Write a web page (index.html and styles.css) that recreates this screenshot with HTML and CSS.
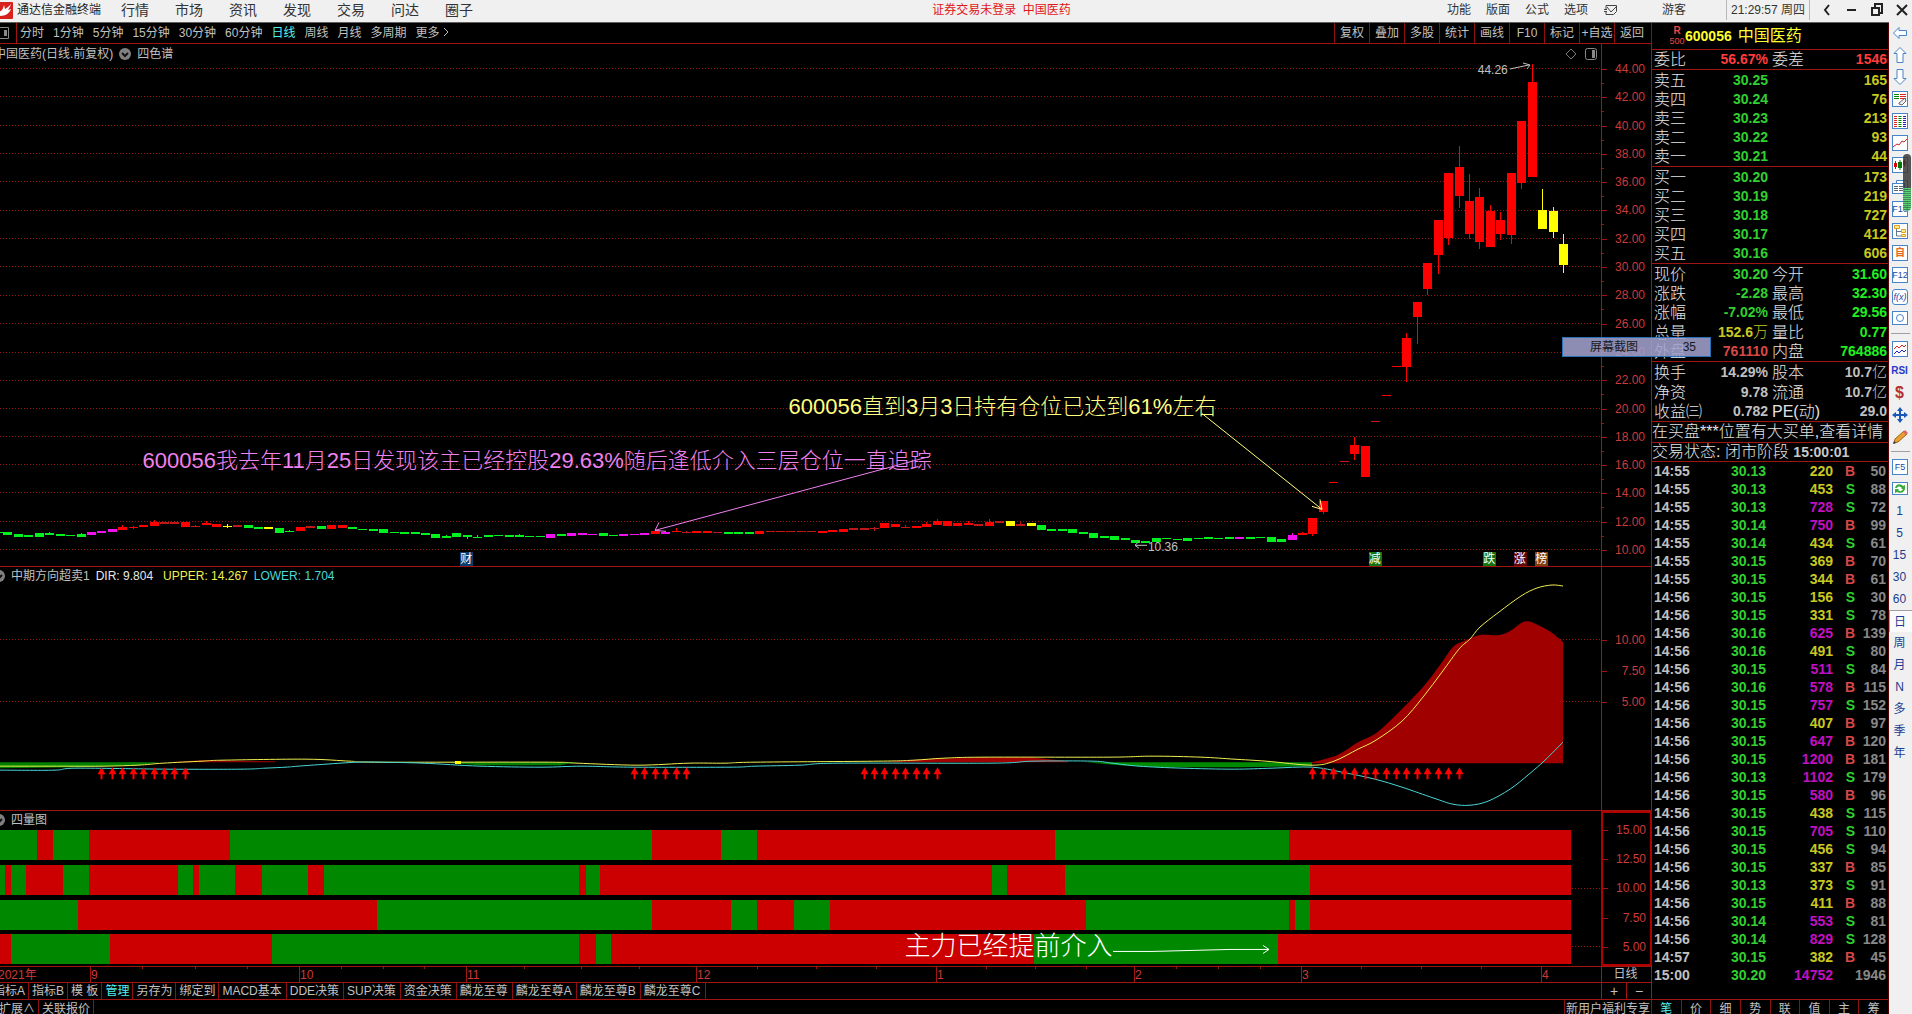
FILE: index.html
```html
<!DOCTYPE html>
<html lang="zh-CN">
<head>
<meta charset="utf-8">
<title>通达信金融终端</title>
<link rel="stylesheet" href="styles.css">
</head>
<body>
<header class="titlebar">
  <svg class="logo" viewBox="0 0 13 17"><rect x="-4" width="17" height="17" rx="1" fill="#d8201c"/><path d="M-1 10C2 9 3 7 4 3l1 4c2-1 3-2 6-5-1 3-2 4-3 6l3-1c-2 5-6 7-12 7z" fill="#fff"/></svg>
  <h1 class="brand">通达信金融终端</h1>
  <nav class="menu">
    <a href="#">行情</a><a href="#">市场</a><a href="#">资讯</a><a href="#">发现</a><a href="#">交易</a><a href="#">问达</a><a href="#">圈子</a>
  </nav>
  <p class="notice">证券交易未登录&nbsp; 中国医药</p>
  <nav class="menu-right">
    <a href="#">功能</a><a href="#">版面</a><a href="#">公式</a><a href="#">选项</a>
    <button class="bare" aria-label="消息"><svg width="15" height="12" viewBox="0 0 15 12" fill="none" stroke="#444"><path d="M3 5V1.500h10.500v6l-3 3H3V8M1 5.500h3M1 7.500h3M4 3l4 5 6-6"/></svg></button>
  </nav>
  <span class="guest">游客</span>
  <time class="clock">21:29:57 周四</time>
  <div class="window-buttons">
    <button class="bare" aria-label="后退"><svg width="12" height="14" fill="none" stroke="#222" stroke-width="2"><path d="M8 2L4 7l4 5"/></svg></button>
    <button class="bare" aria-label="最小化"><svg width="12" height="14" fill="none" stroke="#222" stroke-width="2"><path d="M1 7h9"/></svg></button>
    <button class="bare" aria-label="还原"><svg width="12" height="14" fill="none" stroke="#222" stroke-width="2"><path d="M1 5h7v7H1zM4 4V1h7v9H9"/></svg></button>
    <button class="bare" aria-label="关闭"><svg width="12" height="14" fill="none" stroke="#222" stroke-width="2"><path d="M1 2l10 10M11 2L1 12"/></svg></button>
  </div>
</header>

<main class="workspace">
  <section class="charts">
    <div class="toolbar">
      <button class="bare panel-toggle" aria-label="侧栏"><svg width="16" height="12" viewBox="0 0 16 12"><path d="M-2 .5H8.500v11H-2" fill="none" stroke="#888"/><rect x="4" y="3" width="3" height="6" fill="#888"/></svg></button>
      <nav class="periods">
        <a href="#">分时</a><a href="#">1分钟</a><a href="#">5分钟</a><a href="#">15分钟</a><a href="#">30分钟</a><a href="#">60分钟</a><a href="#" class="current">日线</a><a href="#">周线</a><a href="#">月线</a><a href="#">多周期</a><a href="#">更多<svg width="9" height="10" fill="none" stroke="#c0c0c0"><path d="M4 1l4 4-4 4"/></svg></a>
      </nav>
      <div class="actions">
        <button>复权</button><button>叠加</button><button>多股</button><button>统计</button><button>画线</button><button>F10</button><button>标记</button><button>+自选</button><button>返回</button>
      </div>
    </div>

    <div class="pane price">
      <div class="plot">
        <svg id="price" viewBox="0 0 1601 523" preserveAspectRatio="none"></svg>
        <div class="caption from-edge"><span>中国医药(日线.前复权)</span><i class="chevron"><svg width="12" height="12" fill="none" stroke="#111" stroke-width="2"><path d="M3 5l3 3 3-3"/></svg></i><span>四色谱</span></div>
        <div class="corner"><svg width="12" height="12" fill="none" stroke="#777"><path d="M6 1l5 5-5 5-5-5z"/></svg><svg width="12" height="12"><rect x=".5" y=".5" width="11" height="11" rx="2" fill="none" stroke="#888"/><rect x="7" y="2" width="3" height="8" fill="#888"/></svg></div>
        <p class="note note-pink">600056我去年11月25日发现该主已经控股29.63%随后逢低介入三层仓位一直追踪</p>
        <p class="note note-yellow">600056直到3月3日持有仓位已达到61%左右</p>
        <span class="mark high">44.26</span><span class="mark low">10.36</span>
        <span class="tag tag-blue">财</span><span class="tag tag-green">减</span><span class="tag tag-green tag-fall">跌</span><span class="tag tag-red">涨</span><span class="tag tag-brown">榜</span>
      </div>
      <ol class="axis axis-price"><li>44.00</li><li>42.00</li><li>40.00</li><li>38.00</li><li>36.00</li><li>34.00</li><li>32.00</li><li>30.00</li><li>28.00</li><li>26.00</li><li>24.00</li><li>22.00</li><li>20.00</li><li>18.00</li><li>16.00</li><li>14.00</li><li>12.00</li><li>10.00</li></ol>
    </div>

    <div class="pane trend">
      <div class="plot">
        <svg id="trend" viewBox="0 0 1601 242" preserveAspectRatio="none"></svg>
        <div class="caption"><i class="chevron cut"><svg width="12" height="12" fill="none" stroke="#111" stroke-width="2"><path d="M3 5l3 3 3-3"/></svg></i><span>中期方向超卖1</span><span class="dir">DIR: 9.804</span><span class="upper">UPPER: 14.267</span><span class="lower">LOWER: 1.704</span></div>
      </div>
      <ol class="axis axis-trend"><li>10.00</li><li>7.50</li><li>5.00</li></ol>
    </div>

    <div class="pane bands">
      <div class="plot">
        <svg id="bands" viewBox="0 0 1601 155" preserveAspectRatio="none"></svg>
        <div class="caption"><i class="chevron cut"><svg width="12" height="12" fill="none" stroke="#111" stroke-width="2"><path d="M3 5l3 3 3-3"/></svg></i><span>四量图</span></div>
        <p class="note note-white">主力已经提前介入</p>
      </div>
      <ol class="axis axis-bands"><li>15.00</li><li>12.50</li><li>10.00</li><li>7.50</li><li>5.00</li></ol>
    </div>

    <div class="dates">
      <div class="plot">
        <svg id="dates" viewBox="0 0 1601 15" preserveAspectRatio="none"></svg>
        <div id="months"></div>
      </div>
      <span class="period-name">日线</span>
    </div>
    <nav class="templates">
      <a href="#">指标A</a><a href="#">指标B</a><a href="#">模 板</a><a href="#" class="current">管理</a><a href="#">另存为</a><a href="#">绑定到</a><a href="#">MACD基本</a><a href="#">DDE决策</a><a href="#">SUP决策</a><a href="#">资金决策</a><a href="#">麟龙至尊</a><a href="#">麟龙至尊A</a><a href="#">麟龙至尊B</a><a href="#">麟龙至尊C</a>
      <div class="scale"><button>+</button><button>−</button></div>
    </nav>
    <nav class="extras"><a href="#">扩展∧</a><a href="#">关联报价</a><a href="#" class="promo">新用户福利专享</a></nav>
  </section>

  <section class="quote">
    <h2 class="stock"><span class="flag"><b>R</b><small>500</small></span><b>600056</b> <span class="name">中国医药</span></h2>
    <table class="book">
      <tbody><tr class="ratio"><th>委比</th><td class="red">56.67%</td><th>委差</th><td class="red">1546</td></tr></tbody>
      <tbody class="side">
        <tr><th>卖五</th><td class="green">30.25</td><th></th><td class="gold">165</td></tr>
        <tr><th>卖四</th><td class="green">30.24</td><th></th><td class="gold">76</td></tr>
        <tr><th>卖三</th><td class="green">30.23</td><th></th><td class="gold">213</td></tr>
        <tr><th>卖二</th><td class="green">30.22</td><th></th><td class="gold">93</td></tr>
        <tr><th>卖一</th><td class="green">30.21</td><th></th><td class="gold">44</td></tr>
      </tbody>
      <tbody class="side">
        <tr><th>买一</th><td class="green">30.20</td><th></th><td class="gold">173</td></tr>
        <tr><th>买二</th><td class="green">30.19</td><th></th><td class="gold">219</td></tr>
        <tr><th>买三</th><td class="green">30.18</td><th></th><td class="gold">727</td></tr>
        <tr><th>买四</th><td class="green">30.17</td><th></th><td class="gold">412</td></tr>
        <tr><th>买五</th><td class="green">30.16</td><th></th><td class="gold">606</td></tr>
      </tbody>
      <tbody class="side">
        <tr><th>现价</th><td class="green">30.20</td><th>今开</th><td class="lime">31.60</td></tr>
        <tr><th>涨跌</th><td class="green">-2.28</td><th>最高</th><td class="lime">32.30</td></tr>
        <tr><th>涨幅</th><td class="green">-7.02%</td><th>最低</th><td class="lime">29.56</td></tr>
        <tr><th>总量</th><td class="gold">152.6<span>万</span></td><th>量比</th><td class="lime">0.77</td></tr>
        <tr><th>外盘</th><td class="dim-red">761110</td><th>内盘</th><td class="lime">764886</td></tr>
      </tbody>
      <tbody>
        <tr><th>换手</th><td>14.29%</td><th>股本</th><td>10.7<span>亿</span></td></tr>
        <tr><th>净资</th><td>9.78</td><th>流通</th><td>10.7<span>亿</span></td></tr>
        <tr><th>收益㈢</th><td>0.782</td><th>PE(动)</th><td>29.0</td></tr>
      </tbody>
    </table>
    <p class="message">在买盘***位置有大买单,查看详情</p>
    <p class="status">交易状态: 闭市阶段 <b>15:00:01</b></p>
    <table class="trades"><tbody id="trades"></tbody></table>
    <nav class="quote-tabs"><a href="#" class="current">笔</a><a href="#">价</a><a href="#">细</a><a href="#">势</a><a href="#">联</a><a href="#">值</a><a href="#">主</a><a href="#">筹</a></nav>
  </section>

  <aside class="rail">
    <button aria-label="返回"><svg viewBox="0 0 16 16" fill="#fff" stroke="#4a84c8"><path d="M1.500 8L7 2.500V5.500h7.500v5H7v3z"/></svg></button>
    <button aria-label="上"><svg viewBox="0 0 16 16" fill="#fff" stroke="#4a84c8"><path d="M8 .5l6 6h-3v9H5v-9H2z"/></svg></button>
    <button aria-label="下"><svg viewBox="0 0 16 16" fill="#fff" stroke="#4a84c8"><path d="M8 15.500l6-6h-3v-9H5v9H2z"/></svg></button>
    <button aria-label="编辑"><svg viewBox="0 0 16 16"><rect x=".5" y=".5" width="15" height="15" fill="#fff" stroke="#4a84c8"/><path d="M2 3.500h5M2 5.500h5M2 7.500h5" stroke="#080"/><path d="M8 3.500h6M8 5.500h6M8 7.500h6" stroke="#d22"/><path d="M7 12l6-5 1 3-4 4-3-1z" fill="#eee" stroke="#666"/></svg></button>
    <button aria-label="报价"><svg viewBox="0 0 16 16"><rect x=".5" y=".5" width="15" height="15" fill="#fff" stroke="#4a84c8"/><g stroke-width="3" stroke-dasharray="1 1"><path d="M3.500 3v11" stroke="#d22"/><path d="M8 3v11" stroke="#080"/><path d="M12.500 3v11" stroke="#22c"/></g></svg></button>
    <button aria-label="走势"><svg viewBox="0 0 16 16"><rect x=".5" y=".5" width="15" height="15" fill="#fff" stroke="#4a84c8"/><path d="M1 12l4-3 2 1 3-4 2 1 3-3" fill="none" stroke="#c22"/></svg></button>
    <button aria-label="K线"><svg viewBox="0 0 16 16"><rect x=".5" y=".5" width="15" height="15" fill="#fff" stroke="#4a84c8"/><path d="M3.500 4v8M12.500 2v8" stroke="#d00"/><path d="M8 3v10" stroke="#070"/><path d="M2 6h3v4H2zM11 4h3v4h-3z" fill="#d00"/><path d="M6 5h4v6H6z" fill="#070"/></svg></button>
    <button aria-label="窗口"><svg viewBox="0 0 16 16"><path d="M4.500 4V1.500h11v9H13" fill="#fff" stroke="#4a84c8"/><rect x=".5" y="4.500" width="12" height="10" fill="#fff" stroke="#4a84c8"/><path d="M2 7.500h4M7 7.500h4M2 9.500h4M7 9.500h4M2 11.500h4M7 11.500h4" stroke="#567"/></svg></button>
    <button class="boxed">F10</button>
    <button aria-label="结构"><svg viewBox="0 0 16 16"><rect x=".5" y=".5" width="15" height="15" fill="#fff" stroke="#4a84c8"/><path d="M4.500 6v7h5M5 8.500h4" fill="none" stroke="#678"/><path d="M2.500 2.500h5v3h-5zM9.500 6.500h4v3h-4zM9.500 11.500h4v2h-4z" fill="#fe8" stroke="#e0a020"/></svg></button>
    <button class="boxed orange">自</button>
    <button class="boxed">F12</button>
    <button class="boxed formula">f(x)</button>
    <button aria-label="圆"><svg viewBox="0 0 16 16"><rect x=".5" y=".5" width="15" height="13" fill="#fff" stroke="#4a84c8"/><circle cx="8" cy="7" r="3.500" fill="none" stroke="#4a84c8"/></svg></button>
    <hr>
    <button aria-label="指标"><svg viewBox="0 0 16 16"><rect x=".5" y=".5" width="15" height="15" fill="#fff" stroke="#4a84c8"/><path d="M2 8l3-3 2 2 3-3 2 2 2-2" fill="none" stroke="#d22"/><path d="M2 13l3-3 2 2 3-3 2 2 2-2" fill="none" stroke="#22c"/></svg></button>
    <button class="rsi">RSI</button>
    <button class="dollar">$</button>
    <button aria-label="移动"><svg viewBox="0 0 16 16"><path d="M8 0l3 4H9v3h3V5l4 3-4 3V9H9v3h2l-3 4-3-4h2V9H4v2L0 8l4-3v2h3V4H5z" fill="#1858b8"/></svg></button>
    <button aria-label="画笔"><svg viewBox="0 0 16 16"><path d="M2 14l1-4 9-8 3 3-9 8z" fill="#e8a030" stroke="#a06018"/><path d="M11 3l2-2 3 3-2 2z" fill="#d66"/><path d="M1 15l1-3 2 2z" fill="#333"/></svg></button>
    <hr>
    <button class="boxed">F5</button>
    <button aria-label="刷新"><svg viewBox="0 0 16 16"><rect x=".5" y="1.500" width="15" height="12" fill="#fff" stroke="#4a84c8"/><path d="M3 7c1-5 7-4 8-2l2-1v4H9l1-1C8 5 6 5 5 7zM13 8c-1 5-7 4-8 3l-2 1V8h4L6 9c2 2 4 1 5-1z" fill="#3cac3c"/></svg></button>
    <button>1</button><button>5</button><button>15</button><button>30</button><button>60</button>
    <button class="pressed">日</button><button>周</button><button>月</button><button>N</button><button>多</button><button>季</button><button>年</button>
    <i class="meter"></i>
  </aside>
</main>
<div class="snip"><span>屏幕截图</span><span>35</span></div>
<script src="app.js"></script>
</body>
</html>
```
FILE: styles.css
```css
* { box-sizing: border-box; }
body {
  margin: 0; height: 100vh; overflow: hidden; display: flex; flex-direction: column;
  background: #000; color: #c0c0c0; font: 12px/16px "Liberation Sans", "Noto Sans CJK SC", sans-serif;
}
h1, h2, p, ol { margin: 0; padding: 0; font-weight: normal; }
a { color: inherit; text-decoration: none; }
button { font: inherit; color: inherit; background: none; border: 0; padding: 0; margin: 0; }
.bare { display: flex; align-items: center; }
.current { color: #54f0f0; }

.titlebar { flex: none; display: flex; align-items: center; height: 23px; padding-bottom: 2px; background: #f0f0f0; border-bottom: 1px solid #606060; color: #333; white-space: nowrap; }
.logo { width: 13px; height: 17px; margin-right: 4px; }
.brand { font-size: 12px; color: #222; }
.menu { display: flex; gap: 26px; margin-left: 20px; font-size: 14px; }
.notice { flex: 1; text-align: center; padding-left: 83px; color: #e01818; }
.menu-right { display: flex; gap: 15px; }
.guest { margin-left: 44px; width: 64px; }
.clock { border: solid #b8b8b8; border-width: 0 1px; width: 84px; text-align: center; line-height: 20px; }
.window-buttons { display: flex; gap: 13px; padding: 0 4px 0 11px; }

.workspace { flex: 1; min-height: 0; display: grid; grid-template-columns: minmax(0, 1fr) 237px 23px; }
.charts { display: flex; flex-direction: column; min-height: 0; min-width: 0; }
.toolbar { flex: none; display: flex; height: 21px; border-bottom: 1px solid #a01414; line-height: 21px; }
.panel-toggle { width: 17px; border-right: 1px solid #a01414; }
.periods { flex: 1; display: flex; gap: 9px; padding-left: 3px; }
.actions { display: flex; padding-right: 2px; border-right: 1px solid #8c1010; }
.actions button { width: 35px; border-left: 1px solid #8c1010; }

.pane { display: flex; min-height: 0; border-bottom: 1px solid #a01414; }
.price { flex: 524 1 0; }
.trend { flex: 243 1 0; }
.bands { flex: 156 1 0; }
.plot { flex: 1; min-width: 0; position: relative; overflow: hidden; }
.plot > svg { display: block; width: 100%; height: 100%; position: absolute; }
.caption { position: relative; display: flex; align-items: center; gap: 6px; height: 18px; }
.caption.from-edge { margin-left: -6px; height: 19px; }
.chevron { width: 12px; height: 12px; border-radius: 50%; background: #808080; display: flex; }
.chevron.cut { margin-left: -7px; }
.dir { color: #e8e8e8; }
.upper { color: #f0f050; margin-left: 4px; }
.lower { color: #48d8d8; }
.corner { position: absolute; right: 4px; top: 4px; display: flex; gap: 8px; }
.note { position: absolute; white-space: nowrap; font-size: 22px; line-height: 30px; font-weight: 300; }
.note-pink { left: 8.900%; top: 77%; color: #ee82ee; }
.note-yellow { left: 49.250%; top: 66.600%; color: #ffff80; }
.note-white { left: 56.500%; top: 77.500%; color: #fff; font-size: 26px; }
.mark { position: absolute; }
.high { left: 92.300%; top: 3.500%; }
.low { left: 71.700%; top: 94.700%; }
.tag { position: absolute; bottom: 0; width: 13px; line-height: 14px; color: #fff; }
.tag-blue { left: 28.750%; background: #0c3c6c; }
.tag-green { left: 85.500%; background: #107410; }
.tag-fall { left: 92.650%; }
.tag-red { left: 94.550%; background: #600808; }
.tag-brown { left: 95.900%; background: #804010; }

.axis { list-style: none; flex: none; width: 51px; display: flex; flex-direction: column; justify-content: space-between; border: solid #a01414; border-width: 0 1px; color: #cc3a3a; line-height: 14px; }
.axis li { position: relative; text-align: right; padding-right: 6px; }
.axis li::before { content: ""; position: absolute; left: 0; top: 7px; width: 5px; height: 1px; background: #a01414; }
.axis-price { padding: 18px 0 9px; }
.axis-price li:not(:last-child)::after { content: ""; position: absolute; left: 0; top: 21px; width: 2px; height: 1px; background: #a01414; }
.axis-trend { padding: 66px 0 100px; }
.axis-bands { padding: 10px 0; border: 2px solid #b00000; }
.axis-bands li { padding-right: 4px; }

.dates { flex: none; display: flex; height: 16px; border-bottom: 1px solid #a01414; }
.period-name { width: 51px; text-align: center; border: solid #a01414; border-width: 0 1px; line-height: 15px; padding-right: 2px; }
.month { position: absolute; color: #cc3a3a; line-height: 16px; }
.templates, .extras { flex: none; display: flex; white-space: nowrap; border-bottom: 1px solid #a01414; height: 17px; }
.templates a, .extras a { padding: 0 3px; border-right: 1px solid #8c1010; }
.templates a:nth-of-type(n+7) { padding-right: 4px; }
.templates a:first-child { margin-left: -10px; }
.scale { margin-left: auto; width: 51px; display: flex; border-right: 1px solid #a01414; }
.scale button { flex: 1; border-left: 1px solid #a01414; font-size: 14px; }
.extras { height: 14px; border: 0; overflow: hidden; line-height: 18px; }
.extras a:first-child { margin-left: -4px; }
.extras .promo { margin-left: auto; padding: 0 1px; border-left: 1px solid #8c1010; }

.quote { display: flex; flex-direction: column; min-height: 0; border-right: 1px solid #500; }
.stock { height: 26px; padding-left: 17px; display: flex; align-items: center; font-size: 14px; color: #ffff30; }
.stock .name { font-size: 16px; margin-left: 6px; }
.flag { display: flex; flex-direction: column; align-items: center; width: 16px; font-size: 10px; line-height: 10px; color: #e84848; }
.flag small { font-size: 9px; }
table { border-collapse: collapse; width: 100%; table-layout: fixed; }
.book tbody { border-top: 1px solid #a01414; }
.book th { font-weight: 300; font-size: 16px; text-align: left; padding: 0 0 0 2px; line-height: 19px; height: 19px; white-space: nowrap; width: 50px; color: #e4e4e4; }
.book th:nth-child(3) { padding-left: 4px; }
.book td { font-weight: bold; font-size: 14px; line-height: 19px; text-align: right; padding: 0; }
.book td:nth-child(2) { width: 66px; }
.book td:nth-child(4) { padding-right: 1px; }
.book td span { font-weight: 300; font-size: 15px; }
.side tr:first-child > * { padding-top: 1px; height: 20px; }
.red { color: #ff3c3c; }
.dim-red { color: #d84848; }
.green { color: #30d030; }
.lime { color: #20f020; }
.gold { color: #c8c820; }
.purple { color: #c010c0; }
.gray { color: #888; }
.message, .status { border-top: 1px solid #a01414; font-size: 16px; height: 21px; line-height: 20px; white-space: nowrap; overflow: hidden; font-weight: 300; color: #e4e4e4; }
.status { height: 19px; line-height: 18px; }
.status b { font-size: 14px; font-weight: bold; color: #c8c8c8; }
.trades { border-top: 1px solid #a01414; font-weight: bold; font-size: 14px; }
.trades td { height: 18px; line-height: 18px; padding: 0; text-align: right; }
.trades td:first-child { width: 38px; text-align: left; padding-left: 2px; }
.trades td:nth-child(2) { width: 76px; }
.trades td:nth-child(3) { width: 67px; }
.trades td:nth-child(4) { width: 22px; }
.trades td:last-child { padding-right: 2px; }
.quote-tabs { margin-top: auto; flex: none; display: flex; height: 15px; overflow: hidden; border-top: 1px solid #a01414; line-height: 18px; }
.quote-tabs a { flex: 1; text-align: center; border-left: 1px solid #8c1010; }
.quote-tabs a:first-child { border-left: 0; }

.rail { position: relative; margin-top: -1px; background: #f0f0f0; display: flex; flex-direction: column; color: #1c3c90; overflow: hidden; }
.rail button { flex: none; height: 22px; display: flex; align-items: center; justify-content: center; padding-right: 2px; }
.rail button > svg { width: 16px; height: 16px; }
.rail hr { flex: none; width: 19px; height: 1px; margin: 3px 2px 4px; border: 0; background: #a0a0a0; }
.rail .boxed { height: 16px; width: 16px; margin: 3px auto 3px 3px; padding: 0; border: 1px solid #4a84c8; background: #fff; font-size: 9px; color: #1848a8; }
.rail .orange { color: #e86820; font-weight: bold; font-size: 10px; }
.rail .formula { border-radius: 3px; font-style: italic; }
.rail .rsi { font-weight: bold; font-size: 10px; color: #2838c8; }
.rail .dollar { font-weight: bold; font-size: 16px; color: #b83030; }
.rail .pressed { background: #fafafa; border: 1px solid #a0a0a0; border-width: 1px 0 0 1px; }
.meter { position: absolute; left: 14px; top: 132px; width: 8px; height: 57px; border-radius: 4px; opacity: .85; background: linear-gradient(#383838 34px, transparent 34px), repeating-linear-gradient(#40d060 0 1px, #287840 1px 2px); }
.snip { position: absolute; right: 201px; top: 337px; width: 149px; height: 20px; padding: 0 14px 0 27px; display: flex; justify-content: space-between; background: rgba(160, 160, 205, .88); border: 1px solid #2870b8; color: #181820; line-height: 18px; }
```
FILE: app.js
```js
const SVG_NS = "http://www.w3.org/2000/svg";
const STEP = 10.44;
const LAST = 149;
const xOf = (i) => 1563 - STEP * (LAST - i);
const COLORS = { r: "#ff0000", d: "#c01818", g: "#00f020", m: "#f010f0", y: "#ffff00" };

function draw(id, tag, attrs) {
  const el = document.createElementNS(SVG_NS, tag);
  for (const key in attrs) el.setAttribute(key, attrs[key]);
  document.getElementById(id).appendChild(el);
}
function rect(id, x, y, width, height, fill) {
  draw(id, "rect", { x: Math.round(x), y, width: Math.round(x + width) - Math.round(x), height, fill, "shape-rendering": "crispEdges" });
}
function line(id, points, stroke, extra = {}) {
  draw(id, "polyline", { points, stroke, fill: "none", "vector-effect": "non-scaling-stroke", ...extra });
}
function gridLine(id, y, from = 0) {
  line(id, `${from},${y} 1601,${y}`, "#981414", { "stroke-dasharray": "1 2", "shape-rendering": "crispEdges" });
}
// Catmull-Rom spline through a list of "x,y" points.
function smooth(text) {
  const p = text.split(" ").map((pair) => pair.split(",").map(Number));
  let d = `M${p[0]}`;
  for (let i = 0; i < p.length - 1; i++) {
    const [a, b, c, e] = [p[i - 1] || p[i], p[i], p[i + 1], p[i + 2] || p[i + 1]];
    d += `C${b[0] + (c[0] - a[0]) / 6},${b[1] + (c[1] - a[1]) / 6} ${c[0] - (e[0] - b[0]) / 6},${c[1] - (e[1] - b[1]) / 6} ${c}`;
  }
  return d;
}
function curve(id, points, stroke) {
  draw(id, "path", { d: smooth(points), stroke, fill: "none", "vector-effect": "non-scaling-stroke" });
}

// Price pane: colour, body top, body bottom, optional wick top and bottom.
const candles = `g 489 492;g 491 494;g 492 494;g 490 494;g 490 492 489;g 491 493;g 492 493;g 491 494 490;m 489 492;m 488 490;m 486 489;r 484 487 482;r 484 485 483 486;r 482 484;r 479 483 477;d 479 481;d 479 481 478;r 479 484;d 483 484 482;r 480 482 478;r 481 484;y 483 484 481 485;d 482 484;g 482 485;g 484 486;y 484 486;g 485 490;g 488 489 487;r 484 488;d 483 485;g 483 486;r 482 486;r 482 485;g 484 486;g 486 487;g 486 488;g 486 490;g 489 490;g 489 491;g 489 491;g 490 492;g 491 495;g 493 495 492;g 490 494;g 492 494 492 496;g 494 495 492;g 492 494;g 492 493;g 492 494;g 492 494 491;g 493 494;g 493 494;m 491 495;g 491 493;m 490 493;m 490 492;m 491 492;g 490 493;g 492 493;m 491 493;m 491 492;m 490 492;r 488 491;m 489 491;r 488 489 485;d 489 490 488;r 488 490;r 488 490;d 489 490;g 489 491;g 489 491;g 489 491;r 488 491;d 488 489;d 488 489;d 488 489;d 488 489;d 488 489;r 488 490;r 487 489;r 486 489;d 485 487;d 485 487;d 485 486 484 488;r 480 485;r 481 484;d 484 485 482;r 483 485;r 481 484 479;r 478 482 476;r 478 483;r 480 483;r 480 482 478;d 481 483;r 479 483 476;d 478 480;y 478 483;d 481 483 479;y 480 483;g 482 487;g 486 488;g 486 488;g 486 490;g 489 491;g 490 495;g 493 495;g 493 497;g 495 497;g 497 500;g 498 500;g 495 499;g 495 496;g 496 497;g 495 498;g 495 496;g 494 496;g 495 496;g 494 496;m 494 496;g 494 496;g 494 495;g 494 499;g 496 499;m 492 497 490;r 490 492 489;r 475 491 475 493;r 458 469 458 471;r 439 440;d 418 419;r 402 411 394 417;r 403 434;d 378 379;r 351 352;r 322 323;r 294 323 289 338;r 258 273 258 300;r 219 245 219 251;r 176 211 176 230;r 129 194 129 201;r 123 152 102 164;r 157 190 130 195;r 153 198 144 205;r 167 203 161 203;r 176 190 168 196;r 129 191 129 200;r 77 139 77 145;r 38 133 20 133;y 166 185 145 185;y 167 188 163 194;y 200 221 190 229`.split(";");

for (let p = 0; p < 18; p++) gridLine("price", Math.round(24 + p * 28.35) + 0.5);
rect("price", 0, 489, 3, 1, COLORS.g);
candles.forEach((row, i) => {
  const [color, ...n] = row.split(" ");
  const [top, bottom, high = top, low = bottom] = n.map(Number);
  const x = Math.round(xOf(i));
  rect("price", x - 4, top, 9, bottom - top, COLORS[color]);
  rect("price", x, high, 1, low - high, COLORS[color]);
});
line("price", "930,413 655,487", "#ee82ee");
line("price", "666,488 655,487 659,479", "#ee82ee");
line("price", "1202,370 1322,466", "#ffff80");
line("price", "1312,463 1322,466 1320,456", "#ffff80");
line("price", "1510,25 1529,21", "#c0c0c0");
line("price", "1523,19 1530,21 1527,25", "#c0c0c0");
line("price", "1147,502 1135,502 1139,498", "#c0c0c0");
line("price", "1135,502 1139,505", "#c0c0c0");

// Trend pane.
gridLine("trend", 72.5);
gridLine("trend", 134.5);
const area = (points, fill) => draw("trend", "polygon", { points, fill });
area("0,195 160,195 138,198 105,199 80,200 0,201", "#008000");
area("441,195 577,195 560,198 480,198", "#008000");
area("1085,195 1312,195 1312,199 1240,200 1160,200 1120,198", "#008a00");
area("168,195 200,193 275,194 275,195", "#900000");
area("880,195 925,192 980,190 1030,190 1068,194 1068,195", "#a00000");
draw("trend", "path", { fill: "#a00000", d: smooth("1312,195 1337,188 1358,175 1376,166 1396,148 1423,120 1440,98 1453,80 1464,74 1480,68 1499,68 1510,64 1523,55 1531,55 1540,59 1551,65 1563,75") + "V196H1312Z" });
curve("trend", "0,199 34,199 65,199 105,199 138,198 163,196 202,194 224,193 306,192 350,194 378,195 546,195 577,196 638,198 689,196 725,196 755,195 879,194 914,193 944,191 984,190 1109,190 1152,189 1201,190 1234,192 1266,194 1312,198 1334,194 1358,182 1376,173 1402,154 1423,130 1442,105 1459,82 1470,72 1480,60 1499,45 1521,29 1537,21 1552,18 1563,19", "#f0f050");
curve("trend", "0,203 54,203 77,201 168,202 242,202 265,201 286,200 298,199 326,197 357,195 378,195 423,196 480,199 541,200 582,199 632,200 730,200 755,199 800,198 838,196 992,196 1033,194 1093,194 1112,196 1139,199 1182,201 1234,202 1272,201 1312,200 1342,205 1375,212 1402,220 1434,231 1453,237 1470,238 1488,234 1510,222 1529,207 1545,193 1563,175", "#48d8d8");
rect("trend", 455, 194, 6, 3, "#ffff00");
for (const [from, to] of [[9, 17], [60, 65], [82, 89], [125, 139]]) {
  for (let i = from; i <= to; i++) {
    const x = Math.round(xOf(i)) + 0.5;
    draw("trend", "path", { d: `M${x} 200l4 7h-3v5h-2v-5h-3z`, fill: "#ff0000" });
  }
}

// Signal bands: colours alternate, starting from the first letter.
gridLine("bands", 77.5);
gridLine("bands", 135.5);
const bands = [
  ["g", 19, [37, 53, 89, 230, 652, 721, 757, 1055, 1289, 1571]],
  ["g", 54, [5, 11, 26, 63, 89, 178, 193, 199, 235, 262, 308, 324, 579, 586, 600, 992, 1007, 1065, 1310, 1571]],
  ["g", 89, [78, 377, 652, 731, 757, 794, 830, 1086, 1289, 1295, 1310, 1571]],
  ["r", 123, [11, 110, 272, 579, 596, 611, 1034, 1278, 1571]],
];
for (const [first, y, stops] of bands) {
  let from = 0;
  let green = first === "g";
  for (const to of stops) {
    rect("bands", from, y, to - from, 30, green ? "#008800" : "#cc0000");
    from = to;
    green = !green;
  }
}
line("bands", "1113,140 1152,140 1230,138 1269,138", "#fff");
line("bands", "1263,134 1269,138 1263,142", "#fff");

// Time axis.
for (const x of [142, 195, 247, 341, 383, 424, 524, 581, 639, 757, 816, 876, 986, 1035, 1086, 1176, 1218, 1260, 1361, 1421, 1481]) rect("dates", x, 0, 1, 2, "#a01414");
for (const [x, label] of [[-2, "2021年"], [90, "9"], [299, "10"], [466, "11"], [696, "12"], [936, "1"], [1134, "2"], [1301, "3"], [1541, "4"]]) {
  if (x > 0) rect("dates", x, 0, 1, 15, "#a01414");
  const span = document.createElement("span");
  span.className = "month";
  span.textContent = label;
  span.style.left = `${((x > 0 ? x + 1 : x) / 1601) * 100}%`;
  document.getElementById("months").appendChild(span);
}

// Trade ticks.
const trades = `14:55 30.13 220 B 50;14:55 30.13 453 S 88;14:55 30.13 728 S 72;14:55 30.14 750 B 99;14:55 30.14 434 S 61;14:55 30.15 369 B 70;14:55 30.15 344 B 61;14:56 30.15 156 S 30;14:56 30.15 331 S 78;14:56 30.16 625 B 139;14:56 30.16 491 S 80;14:56 30.15 511 S 84;14:56 30.16 578 B 115;14:56 30.15 757 S 152;14:56 30.15 407 B 97;14:56 30.15 647 B 120;14:56 30.15 1200 B 181;14:56 30.13 1102 S 179;14:56 30.15 580 B 96;14:56 30.15 438 S 115;14:56 30.15 705 S 110;14:56 30.15 456 S 94;14:56 30.15 337 B 85;14:56 30.13 373 S 91;14:56 30.15 411 B 88;14:56 30.14 553 S 81;14:56 30.14 829 S 128;14:57 30.15 382 B 45;15:00 30.20 14752  1946`;
for (const trade of trades.split(";")) {
  const [time, price, volume, side, count] = trade.split(" ");
  const row = document.getElementById("trades").insertRow();
  const cells = [[time, ""], [price, "green"], [volume, volume >= 500 ? "purple" : "gold"], [side, side === "B" ? "dim-red" : "green"], [count, "gray"]];
  for (const [text, name] of cells) {
    const cell = row.insertCell();
    cell.textContent = text;
    cell.className = name;
  }
}
```
